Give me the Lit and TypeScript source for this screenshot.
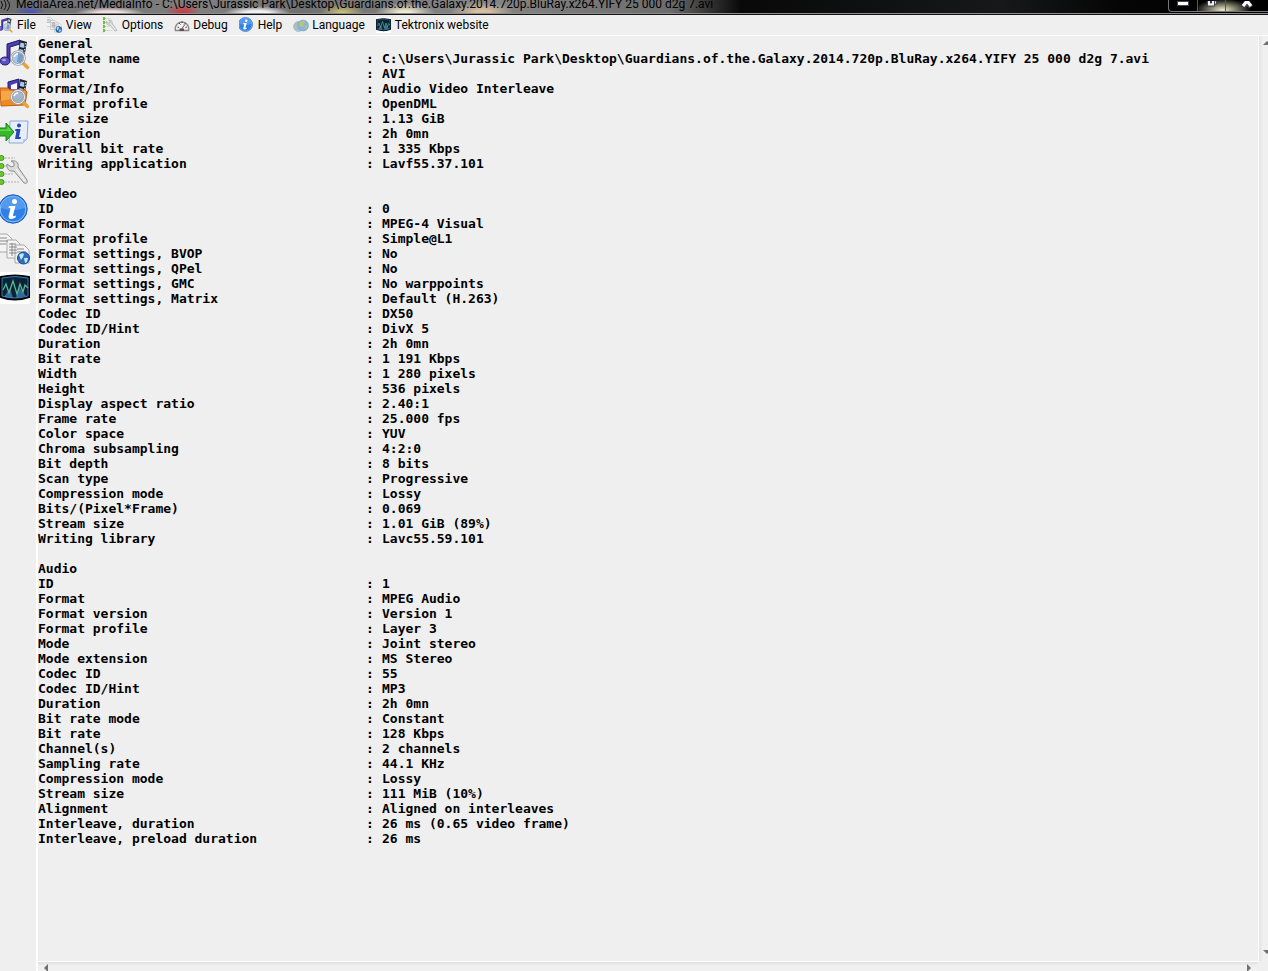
import { LitElement, html, css, svg } from "lit";
import { customElement } from "lit/decorators.js";

type Row = [string, string];
interface Section { title: string; rows: Row[]; }

const FILE = "C:\\Users\\Jurassic Park\\Desktop\\Guardians.of.the.Galaxy.2014.720p.BluRay.x264.YIFY 25 000 d2g 7.avi";

const REPORT: Section[] = [
  { title: "General", rows: [
    ["Complete name", FILE],
    ["Format", "AVI"],
    ["Format/Info", "Audio Video Interleave"],
    ["Format profile", "OpenDML"],
    ["File size", "1.13 GiB"],
    ["Duration", "2h 0mn"],
    ["Overall bit rate", "1 335 Kbps"],
    ["Writing application", "Lavf55.37.101"],
  ] },
  { title: "Video", rows: [
    ["ID", "0"],
    ["Format", "MPEG-4 Visual"],
    ["Format profile", "Simple@L1"],
    ["Format settings, BVOP", "No"],
    ["Format settings, QPel", "No"],
    ["Format settings, GMC", "No warppoints"],
    ["Format settings, Matrix", "Default (H.263)"],
    ["Codec ID", "DX50"],
    ["Codec ID/Hint", "DivX 5"],
    ["Duration", "2h 0mn"],
    ["Bit rate", "1 191 Kbps"],
    ["Width", "1 280 pixels"],
    ["Height", "536 pixels"],
    ["Display aspect ratio", "2.40:1"],
    ["Frame rate", "25.000 fps"],
    ["Color space", "YUV"],
    ["Chroma subsampling", "4:2:0"],
    ["Bit depth", "8 bits"],
    ["Scan type", "Progressive"],
    ["Compression mode", "Lossy"],
    ["Bits/(Pixel*Frame)", "0.069"],
    ["Stream size", "1.01 GiB (89%)"],
    ["Writing library", "Lavc55.59.101"],
  ] },
  { title: "Audio", rows: [
    ["ID", "1"],
    ["Format", "MPEG Audio"],
    ["Format version", "Version 1"],
    ["Format profile", "Layer 3"],
    ["Mode", "Joint stereo"],
    ["Mode extension", "MS Stereo"],
    ["Codec ID", "55"],
    ["Codec ID/Hint", "MP3"],
    ["Duration", "2h 0mn"],
    ["Bit rate mode", "Constant"],
    ["Bit rate", "128 Kbps"],
    ["Channel(s)", "2 channels"],
    ["Sampling rate", "44.1 KHz"],
    ["Compression mode", "Lossy"],
    ["Stream size", "111 MiB (10%)"],
    ["Alignment", "Aligned on interleaves"],
    ["Interleave, duration", "26 ms (0.65 video frame)"],
    ["Interleave, preload duration", "26 ms"],
  ] },
];

const lens = svg`
  <path d="M22.500 24.500l5 5" stroke="#e9a437" stroke-width="3.500" stroke-linecap="round"/>
  <circle cx="18" cy="20" r="6.500" fill="#8fbdf0" fill-opacity=".8" stroke="#9a9ea4" stroke-width="2.500"/>
  <circle cx="18" cy="20" r="6.500" fill="none" stroke="#f4f4f4" stroke-width="1"/>
  <path d="M14 19q1-3 4-3" stroke="#fff" stroke-width="1.500" fill="none"/>`;

const film = svg`
  <path d="M20 2l7 2-4 22-6-2z" fill="#1b1f2c"/>
  <path d="M20.500 4.500l4 1-.7 4.500-4-1zM19.500 11l4 1-.7 4.500-4-1z" fill="#a8cdea"/>
  <path d="M25.800 5l-3.500 20" stroke="#e4eaf2" stroke-width="1" stroke-dasharray="1.500 1.500"/>`;

const ICONS: Record<string, unknown> = {
  file: svg`
    <path d="M7 6l13-4v4L10 9v14H7z" fill="#4a3fae" stroke="#241c70"/>
    ${film}
    <ellipse cx="5" cy="23" rx="5" ry="4" fill="#5a50c4" stroke="#241c70"/>
    <ellipse cx="4" cy="22" rx="2" ry="1.200" fill="#a59fec"/>
    ${lens}`,
  folder: svg`
    <path d="M8 12V5l11-3v10z" fill="#4a3fae" stroke="#241c70"/>
    <path d="M11 12V8l6-2v6z" fill="#fff"/>
    ${film}
    <path d="M0 11h8l2 2h15l2 2-2 13-24 1z" fill="#ef8a22" stroke="#c2610c"/>
    <path d="M1 14h24l-1 5L1 24z" fill="#fbb45c" opacity=".7"/>
    ${lens}`,
  export: svg`
    <path d="M10 5h18l-1 18-4 4H9z" fill="#e6eefc" stroke="#8fa3d8"/>
    <path d="M23 27v-4h4z" fill="#b8c8ee"/>
    <circle cx="19" cy="9.500" r="2" fill="#2746b8"/>
    <path d="M15.500 13h5l-1.500 8h2l-.5 2h-5.500l1.500-8h-1.500z" fill="#2746b8"/>
    <path d="M-2 12h8V7l8 9-8 9v-5h-8z" fill="#35b928" stroke="#178610"/>
    <path d="M-1 13.500h8.500V10l4 5h-12.500z" fill="#8be577" opacity=".6"/>`,
  options: svg`
    <g stroke="#cfcfcf" stroke-width="2" stroke-dasharray="2 1">
      <path d="M5 3h10M5 11h6M5 19h8M5 27h14"/>
    </g>
    <g fill="#6cc832" stroke="#3f9414"><circle cx="1.500" cy="3" r="2.500"/><circle cx="1.500" cy="11" r="2.500"/><circle cx="1.500" cy="19" r="2.500"/><circle cx="1.500" cy="27" r="2.500"/></g>
    <path d="M7 9l4 3 3-1 0-3-3-2c5-1 8 2 7 6l9 13c1 3-1 4-3 3L14 16c-4 1-8-2-7-7z" fill="#dcdcdc" stroke="#8c8c8c"/>
    <path d="M16 14l9 12" stroke="#fff"/>`,
  info: svg`
    <circle cx="13" cy="15" r="14.200" fill="#2f7fe6" stroke="#1e5cb8"/>
    <circle cx="13" cy="15" r="12.800" fill="none" stroke="#8fc1fa"/>
    <path d="M1 14a12 12 0 0 1 24 0q-12 4-24 0z" fill="#6eb0f8" opacity=".55"/>
    <circle cx="14.500" cy="7.500" r="2.500" fill="#fff"/>
    <path d="M9 12h6.500l-2.500 9q0 2 3 .5l-.5 2q-7 3.500-7-1l2-8q-.5-1-2-.5z" fill="#fff"/>`,
  sheets: svg`
    <g fill="#f4f4f4" stroke="#a8a8a8">
      <path d="M-2 1h9l5 5v13H-2z"/><path d="M7 7h9l4 4v14H7z"/><path d="M15 12h9l5 5v13H15z"/>
    </g>
    <path d="M0 5h7M0 8h8M0 11h6M9 11h7M9 14h8M9 17h8M9 20h8M12 10v13M17 16h7M17 19h9" stroke="#888" stroke-width="1"/>
    <circle cx="23.500" cy="25" r="6" fill="#2a6fc0" stroke="#174c90"/>
    <path d="M19 22q3-3 5-1l-1 3-2 3zM24 25l4 0-1 4-2 1z" fill="#c8e2f6"/>`,
  scope: svg`
    <path d="M0 0h30v32H0z" fill="#fff"/>
    <path d="M1 5q14-3 28 0v20q-14 5-28 0z" fill="#0b1726" stroke="#000" stroke-width="2"/>
    <path d="M2 6q13-3 26 0v18q-13 4-26 0z" fill="#0d2138" stroke="#2e80b4"/>
    <path d="M4 25l6-9 3 10zM16 26l3-11 7 9z" fill="#4f9bdc" opacity=".6"/>
    <path d="M3 18l3-6 3 9 4-12 4 13 3-10 3 8 2-7 3 3" fill="none" stroke="#55b98e" stroke-width="1.300"/>`,
  debug: svg`
    <path d="M3 27a13.500 13.500 0 1 1 26 0z" fill="#f2f2f2" stroke="#888" stroke-width="3"/>
    <path d="M7 20l3 1M10 12l3 3M16 9v3M23 12l-3 3M26 20l-3 1" stroke="#444" stroke-width="2"/>
    <path d="M15 24l7-9" stroke="#c33" stroke-width="2"/><path d="M11 28v-5h9v5z" fill="#555"/>`,
  language: svg`
    <circle cx="11" cy="19" r="10" fill="#a9bfd8" stroke="#8ea8c4"/>
    <circle cx="20" cy="17" r="11" fill="#8ab4dc" stroke="#7a98b8"/>
    <path d="M13 10l8-3 4 4-5 3 2 4-5 3-4-5zM3 16l5-2 1 7-4 2zM24 17l5 0-2 6-4-1z" fill="#b4c878"/>`,
};

const MENU = [
  ["file", "File"], ["sheets", "View"], ["options", "Options"], ["debug", "Debug"],
  ["info", "Help"], ["language", "Language"], ["scope", "Tektronix website"],
];
const TOOLS = [
  ["file", "Open file"], ["folder", "Open folder"], ["export", "Export"], ["options", "Options"],
  ["info", "About"], ["sheets", "View"], ["scope", "Tektronix website"],
];

const icon = (name: string, cls: string) =>
  html`<svg class=${cls} viewBox="0 0 32 32" fill="none" aria-hidden="true">${ICONS[name]}</svg>`;

@customElement("title-bar")
class TitleBar extends LitElement {
  static styles = css`
    :host { display: block; }
    .bar {
      display: flex; justify-content: space-between; height: 13px; overflow: hidden;
      border-bottom: 1px solid #8d8d8d; box-shadow: 0 1px 0 #141014; margin-bottom: 1px;
      font: 12px/16px Roboto, "Open Sans", sans-serif; color: #000;
      background: linear-gradient(90deg, #000 0, #060606 700px, #17181a 1000px, #050505 1120px, #000 100%);
    }
    .title {
      margin: 0; padding: 0 28px 0 0; font: inherit; white-space: pre; display: flex; gap: 5px;
      background:
        radial-gradient(ellipse 16px 8px at 30px 13px, #3f4fc0, transparent),
        radial-gradient(ellipse 36px 7px at 110px 14px, #f0dede 40%, transparent),
        radial-gradient(ellipse 18px 10px at 183px 13px, #d83038, transparent),
        radial-gradient(ellipse 34px 8px at 257px 14px, #f0f0f4 40%, transparent),
        radial-gradient(ellipse 22px 9px at 342px 13px, #d4c870, transparent),
        radial-gradient(ellipse 30px 10px at 405px 13px, #eeeacc 20%, transparent),
        radial-gradient(ellipse 32px 10px at 482px 12px, #d8bea0 20%, transparent),
        linear-gradient(90deg, #6c6c6c, #808080 200px, #707070 300px, #868686 480px, #6c6c6c 670px, transparent);
    }
    .label { margin-top: -4px; }
    .signal { width: 11px; height: 13px; }
    .buttons { display: flex; margin: 0; height: 11px; border: 1px solid #77777b; border-top: 0; border-right: 0; border-radius: 0 0 0 4px;
      background: radial-gradient(ellipse 28px 11px at 54px 10px, #eeedc8, transparent); }
    button { appearance: none; border: 0; padding: 1px 0 0; background: none; width: 28px; display: flex; justify-content: center; }
    button + button { border-left: 1px solid #58585c; }
    .wide { width: 43px; }
    .glyph { width: 14px; height: 8px; }
  `;
  render() {
    return html`<header class="bar">
      <h1 class="title"><svg class="signal" viewBox="0 0 11 13" fill="none" stroke="#111" aria-hidden="true"><path d="M1 1q3 4 0 8M4 0q4 5 0 10M7 0q5 5 0 11"/></svg><span class="label">MediaArea.net/MediaInfo - ${FILE}</span></h1>
      <div class="buttons">
        <button aria-label="Minimize"><svg class="glyph" viewBox="0 0 14 8"><path d="M1.500.5h11v4h-11z" fill="#fff" stroke="#445"/></svg></button>
        <button aria-label="Restore"><svg class="glyph" viewBox="0 0 14 8"><path d="M2.500-2v7h7v-7M9.500 3h2v-6" fill="#eee" stroke="#445"/><path d="M5.500-2v4h1v-4" fill="#333" stroke="#334"/></svg></button>
        <button class="wide" aria-label="Close"><svg class="glyph" viewBox="0 0 14 8"><path d="M3 6l4-5 4 5M5 -2l2 3 2-3" fill="none" stroke="#445" stroke-width="5"/><path d="M3 5l4-5 4 5M5 -3l2 3 2-3" fill="none" stroke="#fff" stroke-width="3"/></svg></button>
      </div>
    </header>`;
  }
}

@customElement("menu-bar")
class MenuBar extends LitElement {
  static styles = css`
    :host { display: block; }
    .menu { display: flex; height: 21px; align-items: center; gap: 11px; margin-left: -2px; border-bottom: 1px solid #fff; box-sizing: border-box; }
    button { appearance: none; border: 0; padding: 0; background: none; display: flex; align-items: center; gap: 3px;
      font: 12px/16px Roboto, "Open Sans", sans-serif; color: #000; white-space: nowrap; }
    .icon { width: 16px; height: 16px; flex: none; }
  `;
  render() {
    return html`<nav class="menu">${MENU.map(([i, t]) => html`<button>${icon(i, "icon")}<span>${t}</span></button>`)}</nav>`;
  }
}

@customElement("tool-bar")
class ToolBar extends LitElement {
  static styles = css`
    :host { display: block; }
    .tools { display: flex; flex-direction: column; gap: 7px; padding-top: 2px; }
    button { appearance: none; border: 0; padding: 0; background: none; display: block; height: 32px; }
    .icon { width: 32px; height: 32px; display: block; }
  `;
  render() {
    return html`<nav class="tools">${TOOLS.map(([i, t]) => html`<button aria-label=${t}>${icon(i, "icon")}</button>`)}</nav>`;
  }
}

@customElement("report-view")
class ReportView extends LitElement {
  static styles = css`
    :host { display: grid; grid-template: minmax(0, 1fr) 10px / minmax(0, 1fr) 10px; min-width: 0; border-left: 2px solid #fff; }
    .text { overflow: hidden; font: bold 13px/15px "DejaVu Sans Mono", "Liberation Mono", monospace; color: #000; }
    section + section { margin-top: 15px; }
    h2 { margin: 0; font: inherit; }
    dl { margin: 0; display: grid; grid-template-columns: 328px 16px 1fr; white-space: pre; }
    dt, dd { margin: 0; }
    .vertical { border-left: 1px solid #fff; background: linear-gradient(90deg, #e4e4e4, #f0f0f0 4px);
      display: flex; flex-direction: column; justify-content: space-between; padding: 4px 0; }
    .horizontal { border-top: 1px solid #fff; background: linear-gradient(#e0e0e0, #f0f0f0 4px);
      display: flex; justify-content: space-between; padding: 0 5px; }
    button { appearance: none; border: 0; padding: 0; background: none; display: flex; width: 9px; height: 9px; overflow: hidden; }
    .horizontal button { padding-top: 2px; }
    .vertical button { padding-left: 4px; box-sizing: border-box; }
    svg { flex: none; width: 8px; height: 8px; fill: #707070; }
  `;
  render() {
    return html`
      <main class="text">${REPORT.map(s => html`<section><h2>${s.title}</h2>
        <dl>${s.rows.map(([k, v]) => html`<dt>${k}</dt><span aria-hidden="true">:</span><dd>${v}</dd>`)}</dl></section>`)}</main>
      <div class="vertical">
        <button aria-label="Scroll up"><svg viewBox="0 0 8 8"><path d="M0 5l4-4 4 4z"/></svg></button>
        <button aria-label="Scroll down"><svg viewBox="0 0 8 8"><path d="M0 2l4 4 4-4z"/></svg></button>
      </div>
      <div class="horizontal">
        <button aria-label="Scroll left"><svg viewBox="0 0 8 8"><path d="M5 0L1 4l4 4z"/></svg></button>
        <button aria-label="Scroll right"><svg viewBox="0 0 8 8"><path d="M3 0l4 4-4 4z"/></svg></button>
      </div>`;
  }
}

@customElement("app-root")
class AppRoot extends LitElement {
  static styles = css`
    :host { display: flex; flex-direction: column; height: 100vh; background: #efefef; overflow: hidden; }
    .body { flex: 1; min-height: 0; display: grid; grid-template-columns: 36px minmax(0, 1fr); }
  `;
  render() {
    return html`<title-bar></title-bar><menu-bar></menu-bar>
      <div class="body"><tool-bar></tool-bar><report-view></report-view></div>`;
  }
}
